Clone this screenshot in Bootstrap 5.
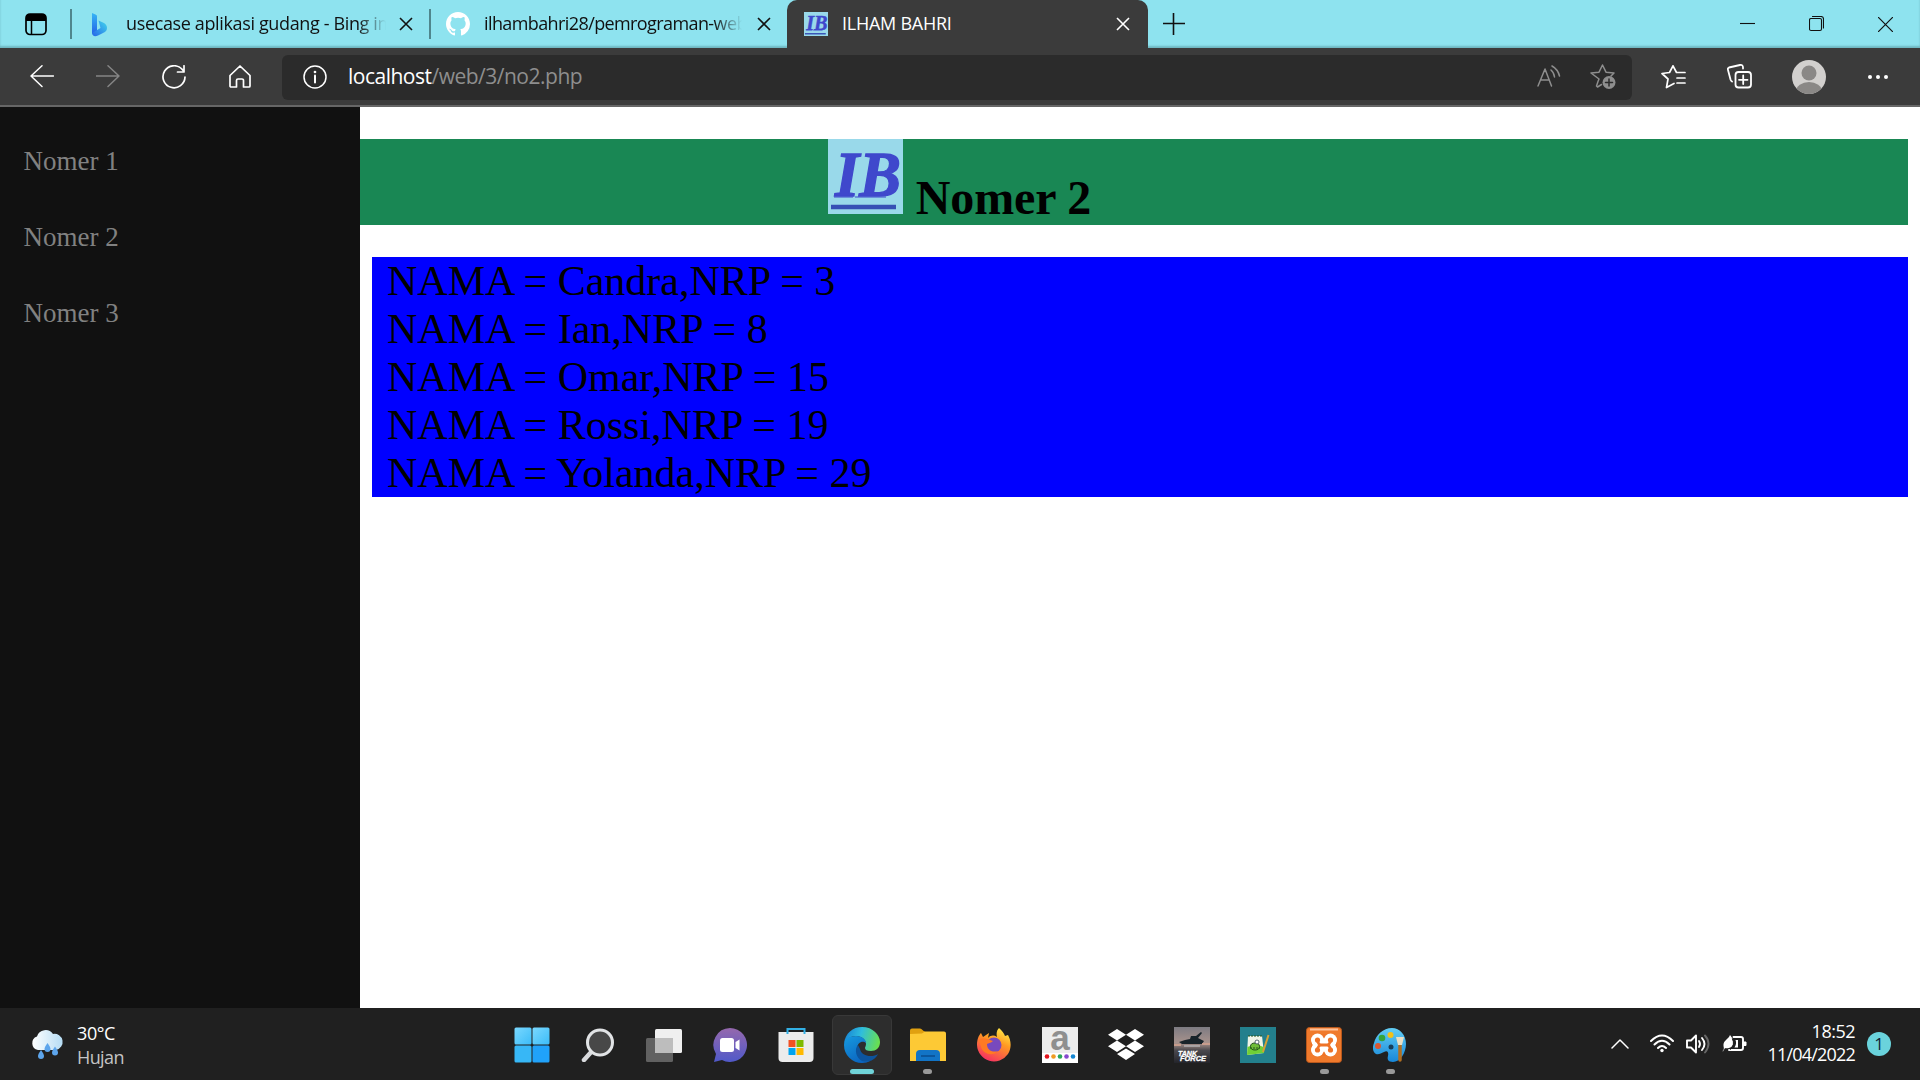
<!DOCTYPE html>
<html lang="id">
<head>
<meta charset="utf-8">
<title>ILHAM BAHRI</title>
<link href="https://cdn.jsdelivr.net/npm/bootstrap@5.3.0/dist/css/bootstrap.min.css" rel="stylesheet">
<style>
html,body{height:100%;overflow:hidden}
body{font-family:"Open Sans","Noto Sans",sans-serif;background:#fff}
svg{display:block;flex:none}
.ui-line{fill:none;stroke:currentColor;stroke-width:1.5;stroke-linecap:round;stroke-linejoin:round}
.tabstrip{height:48px;background:#8ee3ef;color:#111;font-size:18px;letter-spacing:-.36px;line-height:47px}
.tabstrip.shade{box-shadow:inset 0 -2px 2px #6fb6c0}
.vsep{width:2px;height:30px;background:#4f868d}
.tabtitle{overflow:hidden;white-space:nowrap;flex:none;height:48px}
.fade-end{-webkit-mask-image:linear-gradient(90deg,#000 calc(100% - 28px),transparent);mask-image:linear-gradient(90deg,#000 calc(100% - 28px),transparent)}
.tab-a{width:360px;padding-left:18px;padding-right:19px}
.tab-b{width:356px;padding-left:15px;padding-right:16px}
.tab-on{width:361px;background:#3b3b3b;color:#fff;border-radius:10px 10px 0 0;padding-left:17px;padding-right:18px}
.toolbar{height:59px;background:#3b3b3b;color:#fff;border-bottom:2px solid #666;padding-left:30px}
.nav-ico{gap:42px;width:252px}
.address{width:1350px;height:45px;margin-top:1px;background:#2b2b2b;border-radius:6px;padding:0 16px 0 21px;font-size:21px;letter-spacing:-.5px;color:#8e8e8e}
.address b{color:#fff;font-weight:400}
.page-area{height:901px;font-family:"Liberation Serif",serif}
.side{width:360px;background:#111;padding:32px 0 0 23.500px;font-size:27px;line-height:31px}
.side a{color:#818181;text-decoration:none;padding:7px 0 8px;margin-bottom:30px;display:block;height:46px}
.main-col{padding:32px 12px 0 0;color:#000}
.band{background:#198754;height:86px;padding-right:349px;gap:13px}
.band h1{font-size:48px;line-height:55px;font-weight:700;margin:0;color:#000;letter-spacing:-.15px}
.data-box{background:#00f;margin:32px 0 0 12px;padding-left:15px;font-size:42px;line-height:48px}
.data-box div{height:48px}
.dock{height:72px;background:#202020;color:#fff;font-size:18px;line-height:24px;padding-top:1px}
.weather{width:498.500px;padding-left:30px;letter-spacing:-.4px}
.app{width:66.050px;height:71px;flex:none;position:relative}
.app.lit::before{content:"";position:absolute;inset:6px 3px 5px;border-radius:6px;background:#2d2d2d;border:1px solid #383838}
.app svg{position:relative}
.app.run::after,.app.lit::after{content:"";position:absolute;bottom:6px;width:9px;height:5px;border-radius:3px;background:#999}
.app.lit::after{width:24px;background:#6fd3d8}
.clock{line-height:23px;letter-spacing:-.8px;width:108px;margin:-2px 12px 0 0}
.tray{margin-top:-2px;padding-right:29px}
.note{width:24px;height:24px;border-radius:50%;background:#6ad3dc;color:#123;line-height:24px;font-size:17px}
</style>
</head>
<body class="d-flex flex-column">
<svg width="0" height="0" class="position-absolute"><defs>
<symbol id="x" viewBox="0 0 14 14"><path d="M1 1l12 12M13 1L1 13" stroke="currentColor" stroke-width="1.6" fill="none"/></symbol>
<symbol id="ib" viewBox="0 0 75 75"><rect width="75" height="75" fill="#99d9ea"/><text x="7" y="57" textLength="66" lengthAdjust="spacingAndGlyphs" font-family="Liberation Serif,serif" font-weight="700" font-style="italic" font-size="63" fill="#3f48cc" stroke="#3f48cc" stroke-width="1.3">IB</text><path d="M6 58h19M27 58h31" stroke="#3f48cc" stroke-width="1.2"/><path d="M3 68h65" stroke="#3650b5" stroke-width="4.5"/></symbol>
</defs></svg>

<header class="tabstrip shade d-flex align-items-center">
  <div class="d-flex align-items-center" style="width:70px;padding-left:25px"><svg width="22" height="23" viewBox="0 0 22 23"><rect x="1" y="1" width="20" height="20.5" rx="4" fill="none" stroke="#000" stroke-width="1.7"/><path d="M1 8V5a4 4 0 0 1 4-4h12a4 4 0 0 1 4 4v3z"/><path d="M6.5 8v13" stroke="#000" stroke-width="1.5"/></svg></div>
  <div class="vsep"></div>
  <div class="tab-a d-flex align-items-center">
    <svg width="19" height="25" viewBox="0 0 19 25"><defs><linearGradient id="bg1" x2="0" y2="1"><stop stop-color="#35b5f5"/><stop offset="1" stop-color="#2465e8"/></linearGradient><linearGradient id="bg2" x1="1" x2="0" y2="1"><stop stop-color="#43d8ec"/><stop offset="1" stop-color="#2564e8"/></linearGradient></defs><path d="M2 1l3.500 1.500c1 .5 1.500 1 1.500 2v15l-5 2z" fill="url(#bg1)"/><path d="M8.500 8.500l5.500 2.500c2 1.200 3 3 3 5 0 3-2 4-4 5l-5 2.500c-3 1.500-6 .5-6-2.500l8.500-5z" fill="url(#bg2)"/></svg>
    <div class="tabtitle fade-end" style="width:260px;margin-left:17px">usecase aplikasi gudang - Bing images</div>
    <svg class="ms-auto" width="14" height="14"><use href="#x"/></svg>
  </div>
  <div class="vsep" style="margin-left:-3px"></div>
  <div class="tab-b d-flex align-items-center">
    <svg width="24" height="24" viewBox="0 0 16 16"><path fill="#fff" d="M8 0C3.580 0 0 3.580 0 8c0 3.540 2.290 6.530 5.470 7.590.4.070.55-.17.55-.38 0-.19-.010-.82-.010-1.490-2.010.37-2.530-.49-2.690-.94-.09-.23-.48-.94-.82-1.130-.28-.15-.68-.52-.010-.53.63-.010 1.080.58 1.230.82.72 1.210 1.870.87 2.330.66.070-.52.28-.87.51-1.070-1.780-.2-3.640-.89-3.640-3.950 0-.87.31-1.590.82-2.150-.08-.2-.36-1.020.08-2.120 0 0 .67-.21 2.200.82a7.600 7.600 0 0 1 4 0c1.530-1.040 2.200-.82 2.200-.82.44 1.100.16 1.920.08 2.120.51.56.82 1.270.82 2.150 0 3.070-1.870 3.750-3.650 3.950.29.25.54.73.54 1.480 0 1.070-.010 1.930-.010 2.200 0 .21.15.46.55.38A8 8 0 0 0 16 8c0-4.420-3.580-8-8-8z"/></svg>
    <div class="tabtitle fade-end" style="width:258px;margin-left:14px;letter-spacing:-.6px">ilhambahri28/pemrograman-web</div>
    <svg class="ms-auto" width="14" height="14"><use href="#x"/></svg>
  </div>
  <div class="tab-on d-flex align-items-center">
    <svg width="24" height="24"><use href="#ib"/></svg>
    <div class="tabtitle" style="margin-left:14px;letter-spacing:-.25px">ILHAM BAHRI</div>
    <svg class="ms-auto" width="14" height="14"><use href="#x"/></svg>
  </div>
  <svg style="margin-left:15px" width="22" height="22"><path d="M0 10.500h22M10.500 0v22" stroke="#111" stroke-width="1.600"/></svg>
  <div class="ms-auto d-flex align-items-center" style="gap:54px;padding-right:27px">
    <svg width="15" height="16"><path d="M0 7.500h15" stroke="#111" stroke-width="1.100"/></svg>
    <svg width="15" height="16" class="ui-line" style="stroke-width:1.100"><rect x=".5" y="2.500" width="12" height="12" rx="1.500"/><path d="M3.500 .5H12a2.500 2.500 0 0 1 2.500 2.500V12"/></svg>
    <svg width="15" height="15"><path d="M0 0l15 15M15 0L0 15" stroke="#111" stroke-width="1.200"/></svg>
  </div>
</header>

<nav class="toolbar d-flex align-items-center">
  <div class="nav-ico d-flex align-items-center">
    <svg width="24" height="24" class="ui-line"><path d="M23.500 11H1M12 .8L1 11l11 10.500"/></svg>
    <svg width="24" height="24" class="ui-line" style="color:#858585"><path d="M0 11h23M12 .8l11 10.200-11 10.500"/></svg>
    <svg width="24" height="24" class="ui-line" style="stroke-width:1.700"><path d="M23 12A11 11 0 1 1 20 4.200L22 6.500M22 .8v6.200h-6.500"/></svg>
    <svg width="24" height="24" class="ui-line" style="stroke-width:1.700"><path d="M2 10.500L12 1l10 9.500V21a1 1 0 0 1-1 1h-5.500v-6.500a1.500 1.500 0 0 0-1.500-1.500h-4A1.500 1.500 0 0 0 8.500 15.500V22H3a1 1 0 0 1-1-1z"/></svg>
  </div>
  <div class="address d-flex align-items-center">
    <svg width="24" height="24" class="ui-line" style="color:#fff"><circle cx="12" cy="12" r="11"/><path d="M12 10.500v7" stroke-width="2"/><circle cx="12" cy="7" r=".6"/></svg>
    <div style="margin-left:21px"><b>localhost</b>/web/3/no2.php</div>
    <svg class="ui-line ms-auto" width="24" height="24"><path d="M1 21L8 4l6.500 17M3.500 15h8.500M14 5q3 2.500 3.500 7M15 1q6 3.500 7.500 10"/></svg>
    <svg class="ui-line" style="margin-left:29px" width="26" height="26"><path d="M8 17.500L6.500 22l1 1 4-2.500M8 17.500l1-2.500-8-6 8-.8L12.500 1 16 8.200l8 .8-3 3"/><circle cx="19" cy="18.500" r="6.500" fill="currentColor" stroke="none"/><path d="M19 15v7M15.500 18.500h7" stroke="#2b2b2b"/></svg>
  </div>
  <div class="d-flex align-items-center" style="margin-left:29px">
    <svg class="ui-line" width="25" height="24" style="stroke-width:1.700"><path d="M13 18.500l-7.500 4L7 14 1 8.500l7.500-1L12 .8l3.500 6.700H24M16 13h8M16 18h8"/></svg>
    <svg class="ui-line" width="25" height="25" style="stroke-width:1.800;margin-left:41px"><path d="M5 17.500Q4 17 3.500 15.500L1 6a2 2 0 0 1 1-2.500L13 1q3-.5 3 2.500v1"/><rect x="8.500" y="8" width="15.500" height="15.500" rx="3"/><path d="M16.200 11.500v8.500M12 15.800h8.500"/></svg>
    <svg width="34" height="34" style="margin-left:40px"><clipPath id="av"><circle cx="17" cy="17" r="17"/></clipPath><g clip-path="url(#av)"><rect width="34" height="34" fill="#d2d0ce"/><circle cx="17" cy="13" r="7.500" fill="#8a8886"/><ellipse cx="17" cy="31" rx="13" ry="9" fill="#8a8886"/></g></svg>
    <svg width="22" height="6" style="margin-left:41px" fill="#fff"><circle cx="3" cy="3" r="2"/><circle cx="11" cy="3" r="2"/><circle cx="19" cy="3" r="2"/></svg>
  </div>
</nav>

<main class="page-area d-flex">
  <aside class="side"><a href="#">Nomer 1</a><a href="#">Nomer 2</a><a href="#">Nomer 3</a></aside>
  <section class="main-col flex-grow-1">
    <div class="band d-flex justify-content-center align-items-start"><svg width="75" height="75"><use href="#ib"/></svg><h1 class="align-self-end">Nomer 2</h1></div>
    <div class="data-box">
      <div>NAMA = Candra,NRP = 3</div><div>NAMA = Ian,NRP = 8</div><div>NAMA = Omar,NRP = 15</div><div>NAMA = Rossi,NRP = 19</div><div>NAMA = Yolanda,NRP = 29</div>
    </div>
  </section>
</main>

<footer class="dock d-flex align-items-center">
  <div class="weather d-flex align-items-center">
    <svg width="36" height="34" viewBox="0 0 36 34"><defs><linearGradient id="cl"><stop stop-color="#fff"/><stop offset="1" stop-color="#b5dcf4"/></linearGradient></defs><path d="M8 22a7 7 0 0 1-1-13.500A9 9 0 0 1 23 6a8 8 0 1 1 3 16z" fill="url(#cl)"/><path id="dr" d="M11 22q3 4 3 6a3 3 0 0 1-6 0q0-2 3-6z" fill="#5da5ec"/><use href="#dr" x="6.500" y="-7"/><use href="#dr" x="14" y="-3.500"/></svg>
    <div style="margin-left:11px"><div>30°C</div><div style="color:#c4c4c4;letter-spacing:-.6px">Hujan</div></div>
  </div>
  <div class="d-flex">
    <div class="app d-flex align-items-center justify-content-center"><svg width="36" height="36"><defs><linearGradient id="w2" x2="1" y2="1"><stop stop-color="#7ad8ff"/><stop offset="1" stop-color="#3cbcf8"/></linearGradient></defs><g fill="url(#w2)"><rect x=".5" y=".5" width="17" height="17" rx="1.500"/><rect x="18.500" y=".5" width="17" height="17" rx="1.500"/><rect x=".5" y="18.500" width="17" height="17" rx="1.500" fill="#37b7f6"/><rect x="18.500" y="18.500" width="17" height="17" rx="1.500" fill="#20a2fa"/></g></svg></div>
    <div class="app d-flex align-items-center justify-content-center"><svg width="34" height="34"><path d="M3 32L12 22" stroke="#d8dadd" stroke-width="4.500" stroke-linecap="round"/><circle cx="19" cy="14.500" r="12.500" fill="#484848" stroke="#e2e4e6" stroke-width="3"/></svg></div>
    <div class="app d-flex align-items-center justify-content-center"><svg width="36" height="34"><rect y="10" width="27" height="24" rx="1.500" fill="#616161"/><rect x="9" y="1" width="27" height="24" rx="1.500" fill="#efefef"/><rect x="9" y="10" width="18" height="15" fill="#bdbdbd"/></svg></div>
    <div class="app d-flex align-items-center justify-content-center"><svg width="34" height="36"><defs><linearGradient id="ch" x2="0" y2="1"><stop stop-color="#9568ad"/><stop offset="1" stop-color="#5059c9"/></linearGradient></defs><path d="M17 1a17 17 0 1 1-8 32l-8 2 2-8A17 17 0 0 1 17 1z" fill="url(#ch)"/><rect x="7" y="11" width="14" height="14" rx="2.500" fill="#fff"/><path d="M22.500 15l4-2.500v11l-4-2.500z" fill="#fff"/></svg></div>
    <div class="app d-flex align-items-center justify-content-center"><svg width="36" height="36"><path d="M.5 5h35v26a4 4 0 0 1-4 4h-27a4 4 0 0 1-4-4z" fill="#ececec"/><path d="M9.500 7V2h17v5" fill="none" stroke="#32b0e5" stroke-width="2"/><path fill="#f25022" d="M10.500 13h7v7h-7z"/><path fill="#7fba00" d="M18.500 13h7v7h-7z"/><path fill="#00a4ef" d="M10.500 21h7v7h-7z"/><path fill="#ffb900" d="M18.500 21h7v7h-7z"/></svg></div>
    <div class="app lit d-flex align-items-center justify-content-center"><svg width="36" height="36" viewBox="0 0 36 36"><defs><linearGradient id="e1" x1="0" y1=".3" x2="1" y2=".5"><stop stop-color="#1683d6"/><stop offset=".45" stop-color="#2fbddd"/><stop offset="1" stop-color="#69e04f"/></linearGradient><linearGradient id="e2" x2=".6" y2="1"><stop stop-color="#169ae0"/><stop offset="1" stop-color="#0b65c0"/></linearGradient></defs><path d="M0 17C1 6 9 0 18 0c11 0 18 8 18 15 0 6-4 9-9 9-4 0-6-1-6-3 0-1 1-2 1-4 0-4-4-8-10-8-5 0-10 3-12 8z" fill="url(#e1)"/><path d="M0 18c0-6 6-9 12-9 7 0 10 4 10 7-3-3-9-1-9 6 0 7 7 13 13 12-2 1-5 2-8 2A18 18 0 0 1 0 18z" fill="url(#e2)"/><path d="M14 18c-4 4-2 13 4 16 7 2 13-1 16-7-6 4-17 2-18-5z" fill="#0c549e"/></svg></div>
    <div class="app run d-flex align-items-center justify-content-center"><svg width="36" height="34"><path d="M0 2.500A2 2 0 0 1 2 .5h8c2 0 3 3 5 3v5H0z" fill="#e0a010"/><path d="M0 6l12-.5 3-2h19a2 2 0 0 1 2 2V33H0z" fill="#fdc935"/><path d="M6 33v-7a4 4 0 0 1 4-4h16a4 4 0 0 1 4 4v7z" fill="#1274c6"/><path d="M11 28h14" stroke="#0a4c8e" stroke-width="1.500"/></svg></div>
    <div class="app d-flex align-items-center justify-content-center"><svg width="36" height="36"><defs><linearGradient id="ff" x1=".8" x2=".3" y2="1"><stop stop-color="#fff04a"/><stop offset=".4" stop-color="#ff9a22"/><stop offset="1" stop-color="#f52d63"/></linearGradient></defs><path d="M23 1c3 3 5 5 6 8l3-1c3 5 4 13 0 19A17 17 0 0 1 1 18C1 12 3 8 5 6l2 4 6-4-1 5c3-3 6-3 9-1-1-4 0-7 2-9z" fill="url(#ff)"/><circle cx="18" cy="18" r="7.500" fill="#7849bd"/><path d="M3 13c5-4 9 0 14 1-2 2-5 2-6 3 0 6 5 9 11 7-5 6-15 3-17-4z" fill="#ff7a23"/></svg></div>
    <div class="app d-flex align-items-center justify-content-center"><svg width="36" height="36" overflow="visible"><rect width="36" height="36" fill="#ededed"/><text x="18" y="23" text-anchor="middle" font-family="Liberation Sans,sans-serif" font-weight="700" font-size="35" fill="#8f8f8f">a</text><path d="M0 26h36v10H0z" fill="#fff"/><circle cx="5" cy="29.500" r="2.300" fill="#e3141d"/><circle cx="11.500" cy="29.500" r="2.300" fill="#ef9b22"/><circle cx="18" cy="29.500" r="2.300" fill="#29a65b"/><circle cx="24.500" cy="29.500" r="2.300" fill="#8549ce"/><circle cx="31" cy="29.500" r="2.300" fill="#1586d1"/></svg></div>
    <div class="app d-flex align-items-center justify-content-center"><svg width="36" height="32" fill="#fff"><path d="M9 0l9 5.700-9 5.800-9-5.800zM27 0l9 5.700-9 5.800-9-5.800zM9 11.500l9 5.700L9 23l-9-5.800zM27 11.500l9 5.700-9 5.800-9-5.800zM18 19.500l9 5.500-9 6-9-6z"/></svg></div>
    <div class="app d-flex align-items-center justify-content-center"><svg width="36" height="36"><defs><linearGradient id="tk" x2="0" y2="1"><stop stop-color="#7d7b82"/><stop offset=".45" stop-color="#a8928c"/><stop offset=".65" stop-color="#4a484d"/><stop offset="1" stop-color="#24252b"/></linearGradient></defs><rect width="36" height="36" fill="url(#tk)"/><path d="M5 15l6-2 5-1 1-3h5l5-4 1 1-4 5 6 3-2 3H8z" fill="#18232a"/><path d="M0 18h7M28 17h8" stroke="#c79c8c" stroke-width="2"/><path d="M10 19h16" stroke="#c9ced4"/><g font-family="Liberation Sans,sans-serif" font-style="italic" font-weight="700" font-size="7.500" fill="#fff" stroke="#fff" stroke-width=".3"><text x="4" y="28.500" textLength="19" lengthAdjust="spacingAndGlyphs">TANK</text><text x="6" y="34" textLength="26" lengthAdjust="spacingAndGlyphs">FORCE</text></g></svg></div>
    <div class="app d-flex align-items-center justify-content-center"><svg width="36" height="36"><rect width="36" height="36" fill="#23808d"/><path d="M8 9h14l2 17-17 2z" fill="#eef4e7"/><path d="M7.500 20q8-4 16 0l.5 6-17 2z" fill="#70cf35"/><ellipse cx="15" cy="19.500" rx="4.500" ry="3.500" fill="#6fbd38" stroke="#24551c"/><circle cx="17" cy="15" r="2" fill="#fff" stroke="#345" stroke-width=".8"/><path d="M10 21h10M8 9h14" stroke="#24551c" stroke-dasharray="2 1"/><path d="M28.500 8L23 25" stroke="#d5a035" stroke-width="2"/></svg></div>
    <div class="app run d-flex align-items-center justify-content-center"><svg width="36" height="36"><rect x=".5" y=".5" width="35" height="35" rx="3" fill="#f07a2c" stroke="#b9581c"/><path d="M4 2.500h28" stroke="#ffc29a" stroke-width="2"/><g fill="#fff"><circle cx="11.500" cy="13" r="6.500"/><circle cx="24.500" cy="13" r="6.500"/><circle cx="11.500" cy="23" r="6.500"/><circle cx="24.500" cy="23" r="6.500"/><path d="M10 11.500h16v13H10zM6 15h24v6H6z"/></g><g fill="#ee7328"><circle cx="11.500" cy="13" r="2.600"/><circle cx="24.500" cy="13" r="2.600"/><circle cx="11.500" cy="23" r="2.600"/><circle cx="24.500" cy="23" r="2.600"/><path d="M11.500 13l3 3.500h7l3-3.500 1.500 1.500-2 3.500 2 3.500-1.500 1.500-3-3.500h-7l-3 3.500-1.500-1.500 2-3.500-2-3.500zM16 7h4l-2 4zM16 29h4l-2-4zM5 16v4l2-2zM31 16v4l-2-2z"/></g></svg></div>
    <div class="app run d-flex align-items-center justify-content-center"><svg width="36" height="36"><defs><linearGradient id="pt" x2="0" y2="1"><stop stop-color="#62cdf4"/><stop offset="1" stop-color="#1787d9"/></linearGradient></defs><path d="M20 1c8 0 14 7 14 16s-6 18-13 18c-5 0-6-3-5-6 1-4-1-6-4-4-3 1-5 3-8 2-3-2-4-6-2-11C4 8 11 1 20 1z" fill="url(#pt)"/><circle cx="10" cy="11" r="3.300" fill="#33a43c"/><circle cx="18.500" cy="8" r="3" fill="#f3c118"/><circle cx="6" cy="19" r="3" fill="#db5630"/><circle cx="19" cy="20" r="2.500" fill="#183e59"/><path d="M28 17v16" stroke="#b16e20" stroke-width="3.500" stroke-linecap="round"/><path d="M24 10h8l-2 8h-4z" fill="#eadfc5"/></svg></div>
  </div>
  <div class="tray ms-auto d-flex align-items-center">
    <svg width="18" height="10" class="ui-line"><path d="M1 9l8-8 8 8"/></svg>
    <svg width="24" height="19" class="ui-line" style="stroke-width:2;margin-left:21px"><path d="M1 7q11-11 22 0M4.500 10.500q7.500-7.500 15 0M8 14q4-4 8 0"/><circle cx="12" cy="16.500" r="1.700" fill="#fff" stroke="none"/></svg>
    <svg width="24" height="22" class="ui-line" style="stroke-width:1.900;margin-left:12px"><path d="M1 7.500h4l5-5v17l-5-5H1zM13 8q2 3 0 6M16 5q5 6 0 12"/><path d="M19 2.500q7 8 0 17" stroke="#666"/></svg>
    <svg width="25" height="20" class="ui-line" style="stroke-width:1.900;margin-left:12px"><path d="M11.500 3H19a2 2 0 0 1 2 2v9a2 2 0 0 1-2 2H7"/><path d="M21.500 8H24v3.500h-2.500z" fill="#fff" stroke-width="1"/><path d="M13.500 6H16v7.500h-3.500q2.500-4 1-7.500z" fill="#fff" stroke="none"/><path d="M.5 17q2-1 1-5C1 6 6 6 8 1c4 4 5 12-1 13q-3 .5-4 0L1 17.500z" fill="#fff" stroke="none"/><path d="M10.500 5q3 6-2 10.500" stroke="#202020" stroke-width="1"/></svg>
    <div class="clock text-end"><div style="letter-spacing:-.5px">18:52</div><div>11/04/2022</div></div>
    <div class="note text-center">1</div>
  </div>
</footer>
<script src="https://cdn.jsdelivr.net/npm/bootstrap@5.3.0/dist/js/bootstrap.bundle.min.js"></script>
</body>
</html>
